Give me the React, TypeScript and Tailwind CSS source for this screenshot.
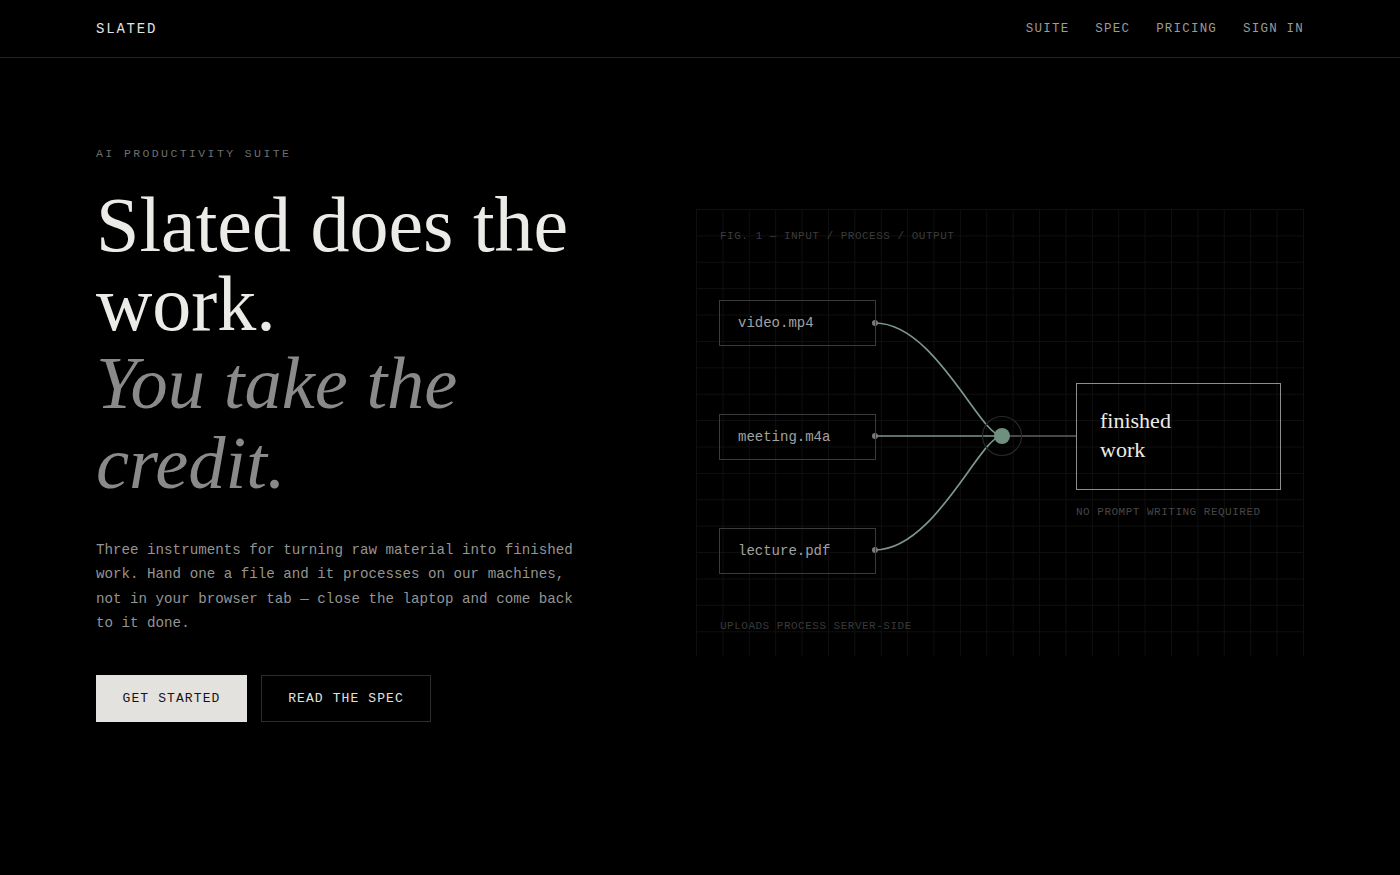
import React from "react";

const mono = "font-['Liberation_Mono','DejaVu_Sans_Mono',monospace]";
const serif = "font-['Liberation_Serif','DejaVu_Serif',serif]";

function Diagram() {
  const c1 = "M179 114 C239 114 284 227 306 227";
  const c2 = "M179 227 L306 227";
  const c3 = "M179 341 C239 341 284 227 306 227";
  return (
    <div className="relative mt-[63px] h-[447px] w-[608px] bg-[linear-gradient(to_right,#0f0f0f_1px,transparent_1px),linear-gradient(to_bottom,#0f0f0f_1px,transparent_1px)] bg-[size:26.4px_26.4px]">
      <svg className="absolute inset-0" width="608" height="447" viewBox="0 0 608 447" fill="none">
        <path d={c1} stroke="#7d978a" strokeWidth="1.7" />
        <path d={c2} stroke="#7d978a" strokeWidth="1.7" />
        <path d={c3} stroke="#7d978a" strokeWidth="1.7" />
        <line x1="306" y1="227" x2="380" y2="227" stroke="#5d625f" strokeWidth="1.7" />
        <circle cx="306" cy="227" r="19.5" stroke="#262826" strokeWidth="1.2" fill="none" />
        <circle cx="306" cy="227" r="8" fill="#6f8f7f" />
        <circle cx="179" cy="114" r="3" fill="#7a7a7a" />
        <circle cx="179" cy="227" r="3" fill="#7a7a7a" />
        <circle cx="179" cy="341" r="3" fill="#7a7a7a" />
      </svg>

      <div className={`absolute left-[24px] top-[20px] text-[11px] leading-[14px] tracking-[0.5px] text-[#3c3c3c] ${mono}`}>
        FIG. 1 — INPUT / PROCESS / OUTPUT
      </div>

      {[
        { label: "video.mp4", top: "top-[91px]" },
        { label: "meeting.m4a", top: "top-[205px]" },
        { label: "lecture.pdf", top: "top-[319px]" },
      ].map((b) => (
        <div
          key={b.label}
          className={`absolute left-[23px] ${b.top} flex h-[46px] w-[157px] items-center border border-[#3b3b3b] pl-[18px] text-[14px] text-[#a2a2a2] ${mono}`}
        >
          {b.label}
        </div>
      ))}

      <div className={`absolute left-[380px] top-[174px] flex h-[107px] w-[205px] items-center border border-[#8e8e8e] pl-[23px] text-[22px] leading-[29px] text-[#ecebe7] ${serif}`}>
        <div className="-mt-[3px]">
          finished
          <br />
          work
        </div>
      </div>

      <div className={`absolute left-[380px] top-[296px] text-[11px] leading-[14px] tracking-[0.5px] text-[#474747] ${mono}`}>
        NO PROMPT WRITING REQUIRED
      </div>
      <div className={`absolute left-[24px] top-[410px] text-[11px] leading-[14px] tracking-[0.5px] text-[#3a3a3a] ${mono}`}>
        UPLOADS PROCESS SERVER-SIDE
      </div>
    </div>
  );
}

export default function App() {
  return (
    <div className="min-h-[875px] w-full bg-black text-[#ecebe7]">
      <header className="flex h-[58px] items-center justify-between border-b border-[#232323] px-[96px] pt-[2px]">
        <div className={`text-[14px] tracking-[1.8px] text-[#e2e2e2] ${mono}`}>SLATED</div>
        <nav className={`flex gap-[26px] text-[12.5px] tracking-[1.2px] text-[#9b9b9b] ${mono}`}>
          <span>SUITE</span>
          <span>SPEC</span>
          <span>PRICING</span>
          <span>SIGN IN</span>
        </nav>
      </header>

      <main className="grid grid-cols-[1fr_608px] items-start px-[96px] pt-[88px]">
        <div className="flex flex-col">
          <div className={`text-[11.5px] leading-[16px] tracking-[2.4px] text-[#6e6e6e] ${mono}`}>
            AI PRODUCTIVITY SUITE
          </div>
          <h1 className={`mt-[24px] text-[78px] leading-[78.5px] font-normal text-[#ecebe7] ${serif}`}>
            Slated does the
            <br />
            work.
            <br />
            <span className="italic text-[74.5px] text-[#8a8a8a]">
              You take the
              <br />
              credit.
            </span>
          </h1>
          <p className={`mt-[36px] w-[490px] text-[14.2px] leading-[24.3px] text-[#949494] ${mono}`}>
            Three instruments for turning raw material into finished work. Hand one a file and it processes on our machines, not in your browser tab — close the laptop and come back to it done.
          </p>
          <div className="mt-[40px] flex gap-[14px]">
            <button className={`h-[47px] w-[151px] bg-[#e4e2de] text-[13px] tracking-[1.1px] text-[#151515] ${mono}`}>
              GET STARTED
            </button>
            <button className={`h-[47px] w-[170px] border border-[#2c2c2c] text-[13px] tracking-[1.1px] text-[#e0e0e0] ${mono}`}>
              READ THE SPEC
            </button>
          </div>
        </div>
        <Diagram />
      </main>
    </div>
  );
}
